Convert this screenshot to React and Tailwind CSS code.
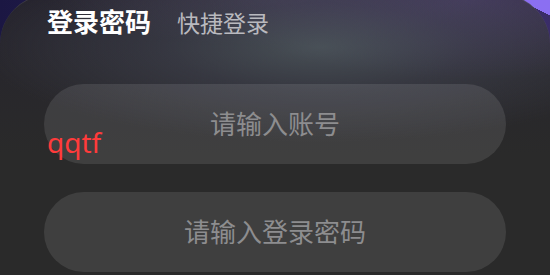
export default function App() {
  return (
    <div
      className="relative w-[550px] h-[275px] overflow-hidden bg-[linear-gradient(to_bottom_left,#8b6ff2_0_14px,transparent_14px),linear-gradient(to_right,#1b1743,#3a2d68)]"
      style={{ fontFamily: '"Noto Sans", "Noto Sans CJK SC", sans-serif' }}
    >
      <div className="-mt-[6px] h-[281px] rounded-t-[50px] border-t border-white/10 bg-[radial-gradient(ellipse_340px_95px_at_320px_52px,rgba(80,90,96,0.8)_0%,rgba(72,76,90,0.45)_45%,transparent_100%),radial-gradient(ellipse_260px_80px_at_470px_4px,rgba(86,68,124,0.6),transparent),radial-gradient(ellipse_220px_50px_at_270px_0px,rgba(70,62,86,0.6),transparent),linear-gradient(to_bottom,#26242e,#2a2a2a_160px)]">
        <div className="flex items-baseline gap-[26px] pl-[47px] pt-[13px]">
          <span className="text-[26px] leading-[28px] font-bold text-white">
            登录密码
          </span>
          <span className="text-[23px] leading-[28px] text-[#b9b9be]">
            快捷登录
          </span>
        </div>

        <div className="flex flex-col gap-[28px] px-[44px] pt-[47px]">
          <input
            placeholder="请输入账号"
            className="h-[80px] w-full rounded-full bg-white/10 text-center text-[26px] text-white outline-none placeholder:text-[#8d8d8f]"
          />
          <input
            type="password"
            placeholder="请输入登录密码"
            className="h-[80px] w-full rounded-full bg-white/10 text-center text-[26px] text-white outline-none placeholder:text-[#8d8d8f]"
          />
        </div>
      </div>

      <span className="absolute left-[47px] top-[128px] text-[28px] leading-[28px] text-[#ff3b3b]">
        qqtf
      </span>
    </div>
  );
}
